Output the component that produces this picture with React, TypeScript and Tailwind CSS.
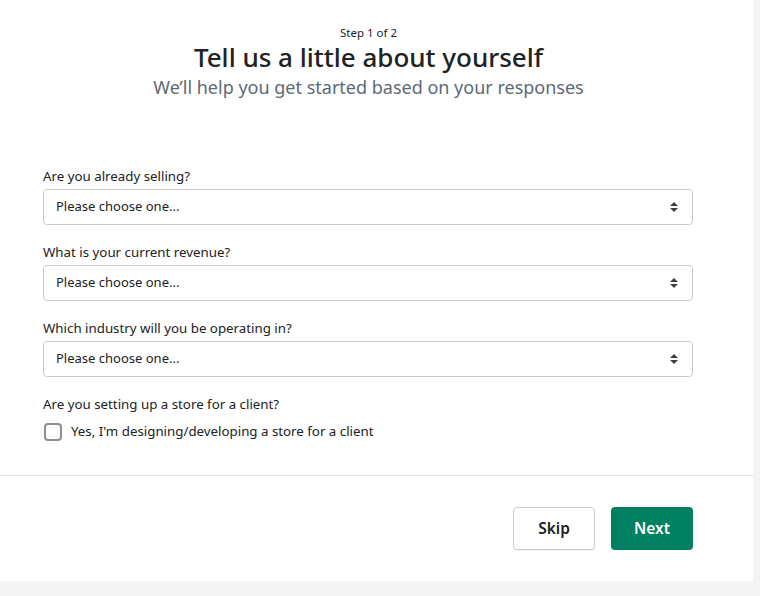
import { useState } from "react";

const questions = [
  "Are you already selling?",
  "What is your current revenue?",
  "Which industry will you be operating in?",
];

function SelectArrows() {
  return (
    <svg width="10" height="14" viewBox="0 0 10 14" className="text-[#3d4044]" aria-hidden="true">
      <path d="M5 2 L9 6 H1 Z" fill="currentColor" />
      <path d="M5 12 L9 8 H1 Z" fill="currentColor" />
    </svg>
  );
}

function QuestionSelect({ label }: { label: string }) {
  return (
    <div className="flex flex-col">
      <label className="text-[13.3px] leading-[20px] text-[#202223]">{label}</label>
      <div className="mt-[3px] flex h-[36px] items-center justify-between rounded-[4px] border border-[#c9cccf] bg-white pl-[12px] pr-[13px]">
        <span className="text-[13px] text-[#202223]">Please choose one...</span>
        <SelectArrows />
      </div>
    </div>
  );
}

export default function App() {
  const [forClient, setForClient] = useState(false);

  return (
    <div
      className="h-[596px] w-[760px] bg-[#f4f4f4]"
      style={{ fontFamily: '"Noto Sans", "Open Sans", sans-serif' }}
    >
      <div className="flex h-[581px] w-[753px] flex-col bg-white">
        {/* Heading */}
        <div className="flex flex-col items-center pr-[16px] pt-[25px]">
          <p className="text-[11.5px] leading-[16px] text-[#202223]">Step 1 of 2</p>
          <h1 className="text-[26px] font-medium leading-[32px] text-[#202223]">
            Tell us a little about yourself
          </h1>
          <p className="text-[18px] leading-[28px] text-[#5c6a78]">
            We’ll help you get started based on your responses
          </p>
        </div>

        {/* Form */}
        <div className="mt-[65px] flex flex-col gap-[17px] pl-[43px] pr-[60px]">
          {questions.map((q) => (
            <QuestionSelect key={q} label={q} />
          ))}
          <div className="flex flex-col">
            <p className="text-[13.3px] leading-[20px] text-[#202223]">
              Are you setting up a store for a client?
            </p>
            <label className="mt-[8px] flex cursor-pointer items-center gap-[9px] pl-[1px]">
              <input
                type="checkbox"
                checked={forClient}
                onChange={(e) => setForClient(e.target.checked)}
                className="h-[18px] w-[18px] appearance-none rounded-[4px] border-2 border-[#8c9196] bg-white checked:bg-[#008060]"
              />
              <span className="text-[13.3px] text-[#202223]">
                Yes, I'm designing/developing a store for a client
              </span>
            </label>
          </div>
        </div>

        {/* Footer */}
        <div className="mt-auto border-t border-[#e1e3e5]">
          <div className="flex justify-end gap-[16px] pb-[31px] pr-[60px] pt-[31px]">
            <button className="h-[43px] w-[82px] rounded-[4px] border border-[#c9cccf] bg-white text-[15.5px] font-semibold text-[#202223] shadow-[0_1px_0_rgba(0,0,0,0.05)]">
              Skip
            </button>
            <button className="h-[43px] w-[82px] rounded-[4px] bg-[#008060] text-[15.5px] font-semibold text-white">
              Next
            </button>
          </div>
        </div>
      </div>
    </div>
  );
}
